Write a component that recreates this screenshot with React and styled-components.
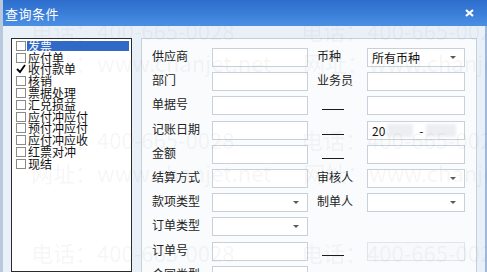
import React from "react";
import styled, { createGlobalStyle } from "styled-components";

const GlobalStyle = createGlobalStyle`
  html, body {
    margin: 0;
    padding: 0;
    background: #eef3f9;
  }
  body {
    font-family: "Noto Sans CJK SC", "Noto Sans", sans-serif;
  }
`;

const Window = styled.div`
  position: relative;
  width: 487px;
  height: 272px;
  overflow: hidden;
  display: flex;
  flex-direction: column;
  background: #eaf0f7;
  border-left: 3px solid #b9c9dc;
  box-sizing: border-box;
`;

const TitleBar = styled.div`
  height: 26px;
  flex: none;
  display: flex;
  align-items: center;
  justify-content: space-between;
  padding: 0 13px 0 2px;
  background: linear-gradient(180deg, #2e6dcd 0%, #3b7fd9 55%, #4c90e4 100%);
  color: #fff;
  font-size: 13px;
  letter-spacing: 0.5px;
`;

const Body = styled.div`
  flex: 1;
  display: flex;
  gap: 9px;
  padding: 12px 8px 0 8px;
  border-right: 2px solid #9db8da;
  min-height: 0;
`;

const ListBox = styled.div`
  width: 119px;
  flex: none;
  background: #fff;
  border: 1px solid #2b2b2b;
  padding-top: 1px;
  display: flex;
  flex-direction: column;
`;

const Item = styled.div`
  height: 11.8px;
  display: flex;
  align-items: center;
  padding-left: 4px;
  font-size: 12px;
  color: #111;
`;

const Box = styled.span`
  width: 8px;
  height: 8px;
  flex: none;
  border: 1px solid #8a8a8a;
  background: #fff;
  margin-right: 1px;
`;

const CheckMark = styled.svg`
  width: 10px;
  height: 10px;
  flex: none;
  margin-right: 1px;
`;

const ItemText = styled.span`
  flex: 1;
  margin-right: 2px;
  padding-left: 1px;
  line-height: 10px;
  height: 10px;
  display: flex;
  align-items: center;
  background: ${(p) => (p.$active ? "#3169c6" : "transparent")};
  color: ${(p) => (p.$active ? "#fff" : "#111")};
`;

const Panel = styled.div`
  flex: 1;
  background: #f9fbfd;
  border: 1px solid #c6d0db;
  border-bottom: none;
  padding: 9px 0 0 10px;
  display: grid;
  grid-template-columns: 60px 96px 59px 98px;
  grid-auto-rows: 19px;
  row-gap: 5.2px;
  align-content: start;
`;

const Label = styled.div`
  font-size: 12px;
  color: #222;
  line-height: 16px;
  padding-left: ${(p) => (p.$right ? "9px" : "0")};
  white-space: nowrap;
`;

const Dash = styled.div`
  margin: 13px 0 0 14px;
  width: 22px;
  height: 1px;
  background: #1a1a1a;
`;

const Field = styled.div`
  box-sizing: border-box;
  border: 1px solid ${(p) => (p.$disabled ? "#dfe5ec" : "#c8d0d9")};
  background: ${(p) => (p.$disabled ? "#f7f9fb" : "#fff")};
  display: flex;
  align-items: center;
  padding: 0 4px;
  font-size: 12px;
  color: #111;
`;

const Arrow = styled.span`
  margin-left: auto;
  margin-right: 4px;
  width: 0;
  height: 0;
  border-left: 3px solid transparent;
  border-right: 3px solid transparent;
  border-top: 3px solid #5a5a5a;
`;

const Blur = styled.span`
  display: inline-block;
  width: ${(p) => p.$w}px;
  height: 13px;
  background: #eceef1;
  filter: blur(1.5px);
  margin: 0 2px;
`;

const Mark = styled.div`
  position: absolute;
  pointer-events: none;
  font-size: 22px;
  white-space: nowrap;
  color: rgba(120, 120, 120, 0.07);
  font-family: "Noto Sans CJK SC", "DejaVu Sans", sans-serif;
`;

const items = [
  "发票",
  "应付单",
  "收付款单",
  "核销",
  "票据处理",
  "汇兑损益",
  "应付冲应付",
  "预付冲应付",
  "应付冲应收",
  "红票对冲",
  "现结",
];

const marks = [
  { t: "电话：400-665-0028", x: 28, y: 14 },
  { t: "电话：400-665-0028", x: 298, y: 14 },
  { t: "网址：www.chanjet.net", x: 28, y: 46 },
  { t: "网址：www.chanjet.net", x: 300, y: 46 },
  { t: "电话：400-665-0028", x: 28, y: 123 },
  { t: "电话：400-665-0028", x: 298, y: 123 },
  { t: "网址：www.chanjet.net", x: 28, y: 156 },
  { t: "网址：www.chanjet.net", x: 300, y: 156 },
  { t: "电话：400-665-0028", x: 28, y: 236 },
  { t: "电话：400-665-0028", x: 298, y: 236 },
];

const App = () => {
  return (
    <Window>
      <GlobalStyle />
      <TitleBar>
        <span>查询条件</span>
        <svg width="9" height="8" viewBox="0 0 9 8">
          <path d="M1 1 L8 7 M8 1 L1 7" stroke="#fff" strokeWidth="2.2" />
        </svg>
      </TitleBar>
      <Body>
        <ListBox>
          {items.map((name, i) => (
            <Item key={name}>
              {name === "收付款单" ? (
                <CheckMark viewBox="0 0 10 10">
                  <path d="M1 5 L4 8 L9 1" stroke="#000" strokeWidth="1.8" fill="none" />
                </CheckMark>
              ) : (
                <Box />
              )}
              <ItemText $active={i === 0}>{name}</ItemText>
            </Item>
          ))}
        </ListBox>
        <Panel>
          <Label>供应商</Label>
          <Field />
          <Label $right>币种</Label>
          <Field>
            所有币种
            <Arrow />
          </Field>

          <Label>部门</Label>
          <Field />
          <Label $right>业务员</Label>
          <Field />

          <Label>单据号</Label>
          <Field />
          <Dash />
          <Field />

          <Label>记账日期</Label>
          <Field />
          <Dash />
          <Field>
            20
            <Blur $w={26} />
            <span style={{ marginLeft: 4 }}>-</span>
            <Blur $w={30} />
          </Field>

          <Label>金额</Label>
          <Field />
          <Dash />
          <Field />

          <Label>结算方式</Label>
          <Field />
          <Label $right>审核人</Label>
          <Field>
            <Arrow />
          </Field>

          <Label>款项类型</Label>
          <Field>
            <Arrow />
          </Field>
          <Label $right>制单人</Label>
          <Field>
            <Arrow />
          </Field>

          <Label>订单类型</Label>
          <Field>
            <Arrow />
          </Field>
          <div />
          <div />

          <Label>订单号</Label>
          <Field />
          <Dash />
          <Field $disabled />

          <Label>合同类型</Label>
          <Field />
          <div />
          <div />
        </Panel>
      </Body>
      {marks.map((m, i) => (
        <Mark key={i} style={{ left: m.x, top: m.y }}>
          {m.t}
        </Mark>
      ))}
    </Window>
  );
};

export default App;
